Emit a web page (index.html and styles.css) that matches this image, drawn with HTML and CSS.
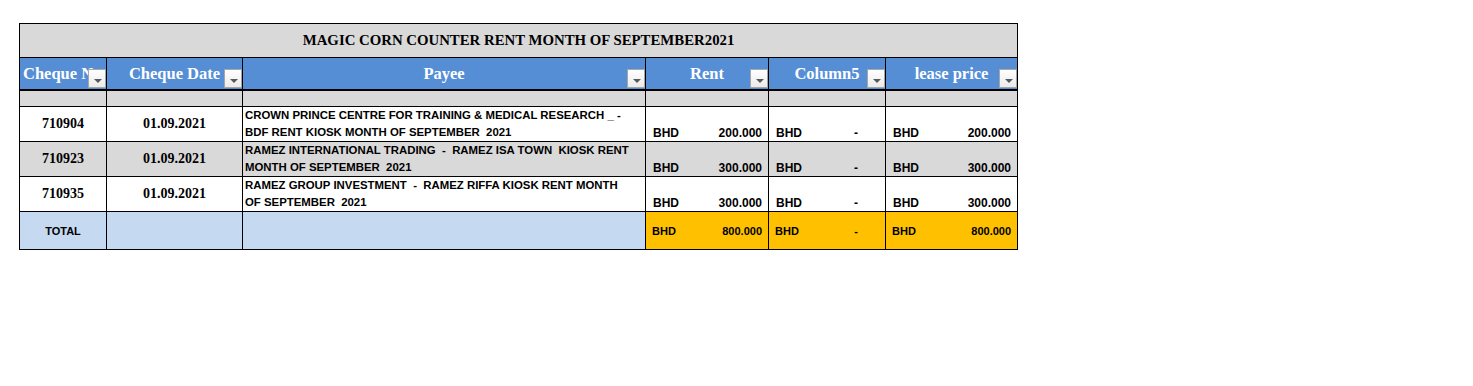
FILE: index.html
```html
<!DOCTYPE html>
<html>
<head>
<meta charset="utf-8">
<link rel="stylesheet" href="styles.css">
</head>
<body>
<table class="sheet">
  <colgroup>
    <col class="c1"><col class="c2"><col class="c3"><col class="c4"><col class="c5"><col class="c6">
  </colgroup>
  <tr class="title-row">
    <td colspan="6">MAGIC CORN COUNTER RENT MONTH OF SEPTEMBER2021</td>
  </tr>
  <tr class="head-row">
    <th class="h-left"><span class="hl">Cheque No</span><span class="dd"></span></th>
    <th>Cheque Date<span class="dd"></span></th>
    <th>Payee<span class="dd"></span></th>
    <th>Rent<span class="dd"></span></th>
    <th>Column5<span class="dd"></span></th>
    <th>lease price<span class="dd"></span></th>
  </tr>
  <tr class="blank-row">
    <td></td><td></td><td></td><td></td><td></td><td></td>
  </tr>
  <tr class="data-row">
    <td class="num">710904</td>
    <td class="num">01.09.2021</td>
    <td class="payee">CROWN PRINCE CENTRE FOR TRAINING &amp; MEDICAL RESEARCH _ -<br>BDF RENT KIOSK MONTH OF SEPTEMBER&nbsp; 2021</td>
    <td class="amt"><div class="acc"><span>BHD</span><span>200.000</span></div></td>
    <td class="amt"><div class="acc"><span>BHD</span><span class="dash">-</span></div></td>
    <td class="amt"><div class="acc"><span>BHD</span><span>200.000</span></div></td>
  </tr>
  <tr class="data-row grey">
    <td class="num">710923</td>
    <td class="num">01.09.2021</td>
    <td class="payee">RAMEZ INTERNATIONAL TRADING&nbsp; -&nbsp; RAMEZ ISA TOWN&nbsp; KIOSK RENT<br>MONTH OF SEPTEMBER&nbsp; 2021</td>
    <td class="amt"><div class="acc"><span>BHD</span><span>300.000</span></div></td>
    <td class="amt"><div class="acc"><span>BHD</span><span class="dash">-</span></div></td>
    <td class="amt"><div class="acc"><span>BHD</span><span>300.000</span></div></td>
  </tr>
  <tr class="data-row">
    <td class="num">710935</td>
    <td class="num">01.09.2021</td>
    <td class="payee">RAMEZ GROUP INVESTMENT&nbsp; -&nbsp; RAMEZ RIFFA KIOSK RENT MONTH<br>OF SEPTEMBER&nbsp; 2021</td>
    <td class="amt"><div class="acc"><span>BHD</span><span>300.000</span></div></td>
    <td class="amt"><div class="acc"><span>BHD</span><span class="dash">-</span></div></td>
    <td class="amt"><div class="acc"><span>BHD</span><span>300.000</span></div></td>
  </tr>
  <tr class="total-row">
    <td class="total-label">TOTAL</td>
    <td></td>
    <td></td>
    <td class="gold"><div class="acc"><span>BHD</span><span>800.000</span></div></td>
    <td class="gold"><div class="acc"><span>BHD</span><span class="dash">-</span></div></td>
    <td class="gold"><div class="acc"><span>BHD</span><span>800.000</span></div></td>
  </tr>
</table>
</body>
</html>
```
FILE: styles.css
```css
html, body {
  margin: 0;
  padding: 0;
  background: #ffffff;
}
body {
  padding: 23px 0 0 19px;
}
.sheet {
  border-collapse: collapse;
  table-layout: fixed;
  width: 998px;
  font-family: "Liberation Sans", Arial, sans-serif;
  color: #000;
}
.c1 { width: 87px; }
.c2 { width: 136px; }
.c3 { width: 403px; }
.c4 { width: 123px; }
.c5 { width: 117px; }
.c6 { width: 132px; }
.sheet td, .sheet th {
  border: 1px solid #000;
  padding: 0;
  overflow: hidden;
  white-space: nowrap;
}
.title-row td {
  height: 33px;
  background: #d9d9d9;
  text-align: center;
  font-family: "Liberation Serif", "Times New Roman", serif;
  font-weight: bold;
  font-size: 14.8px;
}
.head-row th {
  position: relative;
  height: 31px;
  background: #558ed5;
  color: #ffffff;
  font-family: "Liberation Serif", "Times New Roman", serif;
  font-weight: bold;
  font-size: 16.5px;
  text-align: center;
  border-bottom: 2px solid #000;
}
.head-row th.h-left {
  text-align: left;
  padding-left: 3px;
}
.dd {
  position: absolute;
  right: 0;
  bottom: 1px;
  width: 18px;
  height: 19px;
  box-sizing: border-box;
  border: 1px solid #a6a6a6;
  background: linear-gradient(#ffffff, #ebebeb);
}
.dd::after {
  content: "";
  position: absolute;
  left: 5px;
  top: 9px;
  border-left: 4px solid transparent;
  border-right: 4px solid transparent;
  border-top: 4px solid #595959;
}
.blank-row td {
  height: 15px;
  background: #d9d9d9;
}
.data-row td {
  height: 34px;
  background: #ffffff;
}
.data-row.grey td {
  background: #d9d9d9;
}
.num {
  text-align: center;
  vertical-align: middle;
  font-family: "Liberation Serif", "Times New Roman", serif;
  font-weight: bold;
  font-size: 14px;
}
.payee {
  vertical-align: top;
  font-weight: bold;
  font-size: 11.4px;
  line-height: 17px;
  padding-left: 2px !important;
}
.amt {
  vertical-align: bottom;
}
.acc {
  display: flex;
  justify-content: space-between;
  font-weight: bold;
  font-size: 12px;
  padding: 0 6px 1px 7px;
}
.acc .dash {
  padding-right: 21px;
}
.total-row td {
  height: 37px;
  background: #c5d9f1;
  vertical-align: middle;
}
.total-label {
  text-align: center;
  font-weight: bold;
  font-size: 11px;
}
.total-row td.gold {
  background: #ffc000;
}
.total-row .acc {
  font-size: 11px;
  padding: 0 6px 0 6px;
}
```
